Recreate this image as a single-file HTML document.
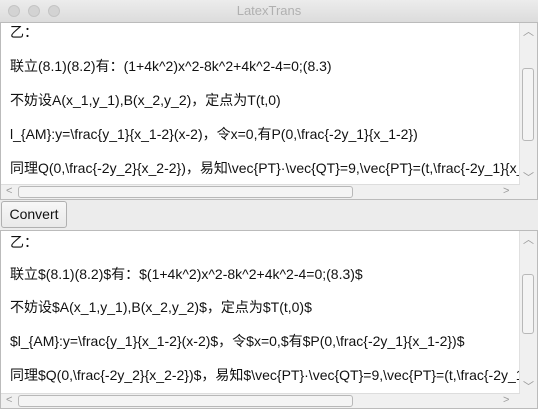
<!DOCTYPE html>
<html><head><meta charset="utf-8"><style>
body{margin:0;width:538px;height:409px;overflow:hidden;background:#ececec;font-family:"Liberation Sans","Noto Sans CJK SC",sans-serif;font-size:14px;color:#111;position:relative}
.title{position:absolute;left:0;top:0;width:538px;height:22px;background:linear-gradient(#ececec,#dcdcdc);border-bottom:1px solid #bdbdbd;text-align:center;line-height:22px;color:#b0b0b0;font-size:13px}
.dot{position:absolute;top:5px;width:12px;height:12px;border-radius:50%;background:#d3d3d3;border:1px solid #c4c4c4;box-sizing:border-box}
.area{position:absolute;left:0;width:538px;background:#fff;border:1px solid #bbb;box-sizing:border-box;overflow:hidden}
.line{position:absolute;left:9px;white-space:nowrap;line-height:16px}
.vs{position:absolute;right:0;top:0;width:17px;background:#f0f0f0;border-left:1px solid #e0e0e0}
.hs{position:absolute;left:0;height:15px;background:#f0f0f0;border-top:1px solid #ddd}
.thumb{position:absolute;background:#f4f4f4;border:1px solid #b8b8b8;border-radius:3px;box-sizing:border-box}
.arr{position:absolute;color:#999;font-size:11px}
.btn{position:absolute;left:1px;top:201px;width:66px;height:27px;border:1px solid #b0b0b0;border-radius:3px;background:linear-gradient(#f7f7f7,#e9e9e9);box-sizing:border-box;text-align:center;line-height:25px;font-size:14px}
</style></head><body>
<div class="title">LatexTrans
<div class="dot" style="left:8px"></div><div class="dot" style="left:28px"></div><div class="dot" style="left:48px"></div></div>

<div class="area" style="top:22px;height:178px">
<div class="line" style="top:1px">乙：</div>
<div class="line" style="top:35px">联立(8.1)(8.2)有：(1+4k^2)x^2-8k^2+4k^2-4=0;(8.3)</div>
<div class="line" style="top:69px">不妨设A(x_1,y_1),B(x_2,y_2)，定点为T(t,0)</div>
<div class="line" style="top:103px">l_{AM}:y=\frac{y_1}{x_1-2}(x-2)，令x=0,有P(0,\frac{-2y_1}{x_1-2})</div>
<div class="line" style="top:137px">同理Q(0,\frac{-2y_2}{x_2-2})，易知\vec{PT}·\vec{QT}=9,\vec{PT}=(t,\frac{-2y_1}{x_1-2})</div>
<div class="vs" style="height:161px"><span class="arr" style="left:3px;top:0">︿</span><div class="thumb" style="left:2px;top:45px;width:12px;height:73px"></div><span class="arr" style="left:3px;top:146px">﹀</span></div>
<div class="hs" style="top:161px;width:519px"><span class="arr" style="left:5px;top:0">&lt;</span><div class="thumb" style="left:17px;top:1px;width:335px;height:12px"></div><span class="arr" style="left:502px;top:0">&gt;</span></div>
<div style="position:absolute;right:0;top:161px;width:17px;height:16px;background:#f0f0f0"></div>
</div>

<div class="btn">Convert</div>

<div class="area" style="top:230px;height:179px">
<div class="line" style="top:3px">乙：</div>
<div class="line" style="top:35px">联立$(8.1)(8.2)$有：$(1+4k^2)x^2-8k^2+4k^2-4=0;(8.3)$</div>
<div class="line" style="top:68px">不妨设$A(x_1,y_1),B(x_2,y_2)$，定点为$T(t,0)$</div>
<div class="line" style="top:102px">$l_{AM}:y=\frac{y_1}{x_1-2}(x-2)$，令$x=0,$有$P(0,\frac{-2y_1}{x_1-2})$</div>
<div class="line" style="top:136px">同理$Q(0,\frac{-2y_2}{x_2-2})$，易知$\vec{PT}·\vec{QT}=9,\vec{PT}=(t,\frac{-2y_1}{x_1-2})$</div>
<div class="vs" style="height:162px"><span class="arr" style="left:3px;top:0">︿</span><div class="thumb" style="left:2px;top:43px;width:12px;height:60px"></div><span class="arr" style="left:3px;top:147px">﹀</span></div>
<div class="hs" style="top:162px;width:519px"><span class="arr" style="left:5px;top:0">&lt;</span><div class="thumb" style="left:17px;top:1px;width:335px;height:12px"></div><span class="arr" style="left:502px;top:0">&gt;</span></div>
<div style="position:absolute;right:0;top:162px;width:17px;height:16px;background:#f0f0f0"></div>
</div>
</body></html>
